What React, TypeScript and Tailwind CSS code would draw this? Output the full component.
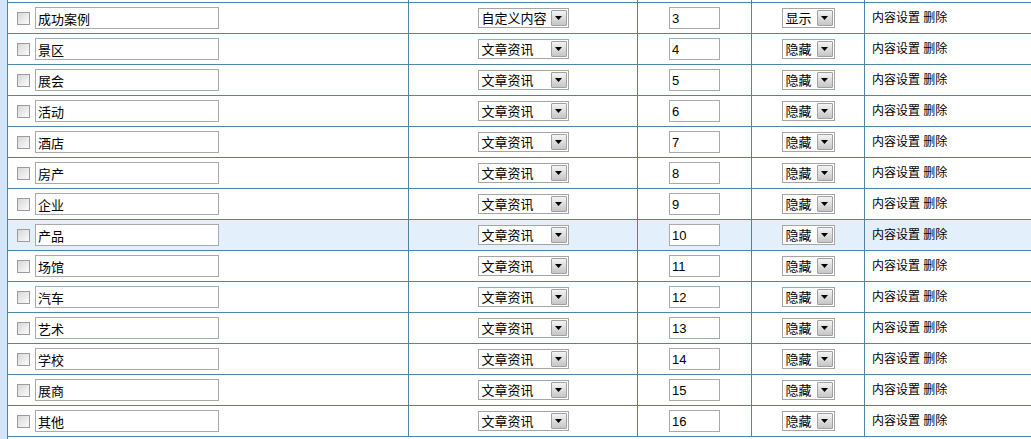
import React from 'react';

type Item = { name: string; kind: string; order: number; show: string; active?: boolean };

const ITEMS: Item[] = [
  { name: '成功案例', kind: '自定义内容', order: 3, show: '显示' },
  { name: '景区', kind: '文章资讯', order: 4, show: '隐藏' },
  { name: '展会', kind: '文章资讯', order: 5, show: '隐藏' },
  { name: '活动', kind: '文章资讯', order: 6, show: '隐藏' },
  { name: '酒店', kind: '文章资讯', order: 7, show: '隐藏' },
  { name: '房产', kind: '文章资讯', order: 8, show: '隐藏' },
  { name: '企业', kind: '文章资讯', order: 9, show: '隐藏' },
  { name: '产品', kind: '文章资讯', order: 10, show: '隐藏', active: true },
  { name: '场馆', kind: '文章资讯', order: 11, show: '隐藏' },
  { name: '汽车', kind: '文章资讯', order: 12, show: '隐藏' },
  { name: '艺术', kind: '文章资讯', order: 13, show: '隐藏' },
  { name: '学校', kind: '文章资讯', order: 14, show: '隐藏' },
  { name: '展商', kind: '文章资讯', order: 15, show: '隐藏' },
  { name: '其他', kind: '文章资讯', order: 16, show: '隐藏' },
];

const font = "font-['Liberation_Sans','Noto_Sans_CJK_SC',sans-serif]";

// old-style windows select with the grey arrow box
const FakeSelect: React.FC<{ value: string; width: string }> = ({ value, width }) => (
  <div className={`${width} h-[20px] flex items-center border border-[#a5a5a5] bg-white`}>
    <span className="flex-1 pl-[3px] text-[13px] leading-none text-black whitespace-nowrap overflow-hidden">{value}</span>
    <span className="w-[16px] h-[16px] mr-[1px] flex items-center justify-center border border-[#a0a0a0] rounded-[1px] bg-gradient-to-b from-[#f4f4f4] to-[#c6c6c6]">
      <svg width="7" height="4" viewBox="0 0 7 4"><path d="M0 0h7L3.5 4z" fill="#000" /></svg>
    </span>
  </div>
);

const Cells: React.FC<{ children?: React.ReactNode[] }> = ({ children }) => {
  const c = children ?? [];
  return (
    <>
      <div className="w-[401px] shrink-0 h-full border-r border-[#4f84a6] flex items-center pl-[9px]">{c[0]}</div>
      <div className="w-[229px] shrink-0 h-full border-r border-[#4f84a6] flex items-center justify-center">{c[1]}</div>
      <div className="w-[114px] shrink-0 h-full border-r border-[#4f84a6] flex items-center justify-center">{c[2]}</div>
      <div className="w-[113px] shrink-0 h-full border-r border-[#4f84a6] flex items-center justify-center">{c[3]}</div>
      <div className="flex-1 h-full flex items-center pl-[7px]">{c[4]}</div>
    </>
  );
};

const Row: React.FC<{ item: Item }> = ({ item }) => (
  <div className={`h-[31px] flex border-b border-[#4f84a6] ${item.active ? 'bg-[#e3f0fc]' : 'bg-white'}`}>
    <Cells>
      {[
        <div key="a" className="flex items-center">
          <span className="w-[13px] h-[13px] border border-[#9c9c9c] bg-gradient-to-br from-[#d8d8d8] to-[#fbfbfb]" />
          <input
            readOnly
            value={item.name}
            className="ml-[5px] w-[184px] h-[22px] border border-[#a9a9a9] bg-white px-[2px] text-[13px] text-black outline-none"
          />
        </div>,
        <FakeSelect key="b" value={item.kind} width="w-[91px]" />,
        <input
          key="c"
          readOnly
          value={item.order}
          className="w-[51px] h-[22px] border border-[#a9a9a9] bg-white px-[2px] text-[13px] text-black outline-none"
        />,
        <FakeSelect key="d" value={item.show} width="w-[53px]" />,
        <span key="e" className="text-[12px] text-black whitespace-nowrap">
          <a className="cursor-pointer">内容设置</a> <a className="cursor-pointer">删除</a>
        </span>,
      ]}
    </Cells>
  </div>
);

export default function App() {
  return (
    <div className={`w-[1031px] h-[439px] overflow-hidden flex bg-[#d2e6f8] ${font}`}>
      <div className="w-[7px] shrink-0" />
      <div className="flex-1 bg-white border-l border-[#4f84a6]">
        <div className="h-[3px] flex border-b border-[#4f84a6]">
          <Cells />
        </div>
        {ITEMS.map((it) => (
          <Row key={it.name} item={it} />
        ))}
      </div>
    </div>
  );
}
